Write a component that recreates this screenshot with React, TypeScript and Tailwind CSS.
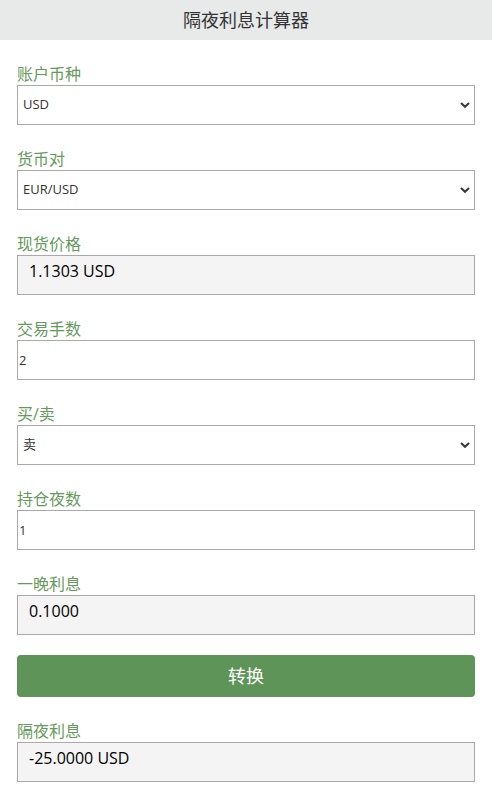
import React from "react";

const font = "font-['Open_Sans','Noto_Sans_CJK_SC',sans-serif]";

function Label({ children }: { children: React.ReactNode }) {
  return (
    <div className="text-[16px] leading-[22px] text-[#669a5c]">{children}</div>
  );
}

function Chevron() {
  return (
    <svg
      className="pointer-events-none absolute right-[5px] top-1/2 -translate-y-1/2"
      width="10"
      height="7"
      viewBox="0 0 10 7"
    >
      <path d="M1 1.5 L5 5.2 L9 1.5" fill="none" stroke="#3a3a3a" strokeWidth="2.2" />
    </svg>
  );
}

function SelectBox({ value }: { value: string }) {
  return (
    <div className="relative h-[40px]">
      <select
        defaultValue={value}
        className="h-full w-full appearance-none border border-[#a9a9a9] bg-white pl-[5px] text-[13px] text-[#333] outline-none"
      >
        <option>{value}</option>
      </select>
      <Chevron />
    </div>
  );
}

function InputBox({ value }: { value: string }) {
  return (
    <input
      defaultValue={value}
      className="block h-[40px] w-full border border-[#a9a9a9] bg-white px-px text-[13px] text-[#333] outline-none"
    />
  );
}

function ValueBox({ value }: { value: string }) {
  return (
    <div className="h-[40px] border border-[#a9a9a9] bg-[#f3f4f3] pl-[11px] pt-[3px] text-[16px] leading-[24px] text-black">
      {value}
    </div>
  );
}

export default function App() {
  return (
    <div className={`min-h-screen bg-white ${font}`}>
      <header className="flex h-[40px] items-center justify-center bg-[#e8e9e9] text-[18px] text-[#333]">
        隔夜利息计算器
      </header>

      <main className="px-[17px] pb-4">
        <div className="mt-[23px]">
          <Label>账户币种</Label>
          <SelectBox value="USD" />
        </div>

        <div className="mt-[23px]">
          <Label>货币对</Label>
          <SelectBox value="EUR/USD" />
        </div>

        <div className="mt-[23px]">
          <Label>现货价格</Label>
          <ValueBox value="1.1303 USD" />
        </div>

        <div className="mt-[23px]">
          <Label>交易手数</Label>
          <InputBox value="2" />
        </div>

        <div className="mt-[23px]">
          <Label>买/卖</Label>
          <SelectBox value="卖" />
        </div>

        <div className="mt-[23px]">
          <Label>持仓夜数</Label>
          <InputBox value="1" />
        </div>

        <div className="mt-[23px]">
          <Label>一晚利息</Label>
          <ValueBox value="0.1000" />
        </div>

        <button className="mt-[20px] flex h-[42px] w-full items-center justify-center rounded-[4px] bg-[#5e9458] text-[18px] text-white">
          转换
        </button>

        <div className="mt-[23px]">
          <Label>隔夜利息</Label>
          <ValueBox value="-25.0000 USD" />
        </div>
      </main>
    </div>
  );
}
